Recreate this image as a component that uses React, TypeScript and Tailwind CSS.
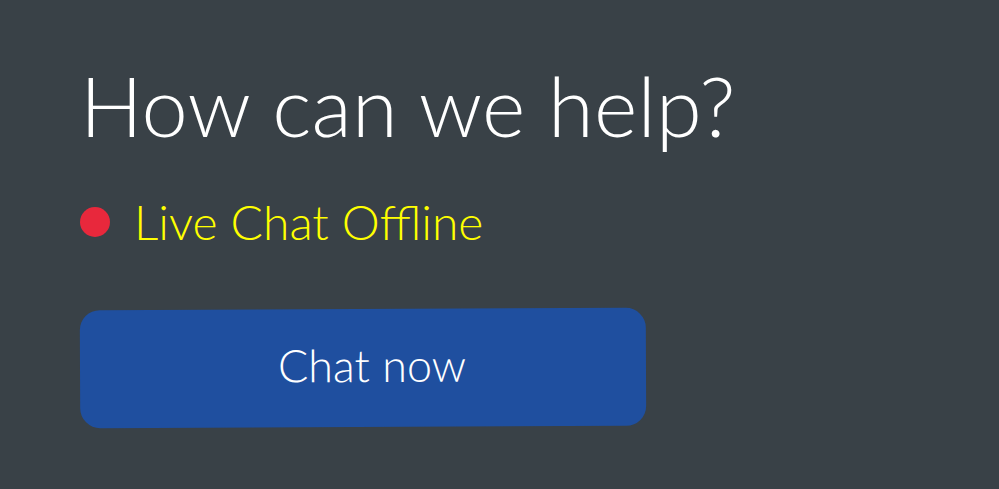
/**
 * HelpPanel - 線上客服入口
 */

export default function App() {
  return (
    <div className="h-[489px] w-[999px] bg-[#394147] pl-[80px] pt-[64px] font-['Lato','Liberation_Sans',sans-serif]">
      {/* Heading */}
      <h1 className="text-[83px] font-light leading-none tracking-[0.2px] text-white">
        How can we help?
      </h1>

      {/* Status */}
      <div className="mt-[51px] flex items-center gap-[24px]">
        <span className="h-[30px] w-[30px] shrink-0 rounded-full bg-[#e8283c]" />
        <span className="text-[48px] font-light leading-none text-[#ffff00]">Live Chat Offline</span>
      </div>

      {/* Chat button */}
      <button className="mt-[63px] flex h-[118px] w-[566px] -rotate-[0.25deg] items-center justify-center rounded-[20px] bg-[#1f4f9f] pb-[6px] pl-[18px] text-[45px] font-light leading-none text-white">
        Chat now
      </button>
    </div>
  )
}
